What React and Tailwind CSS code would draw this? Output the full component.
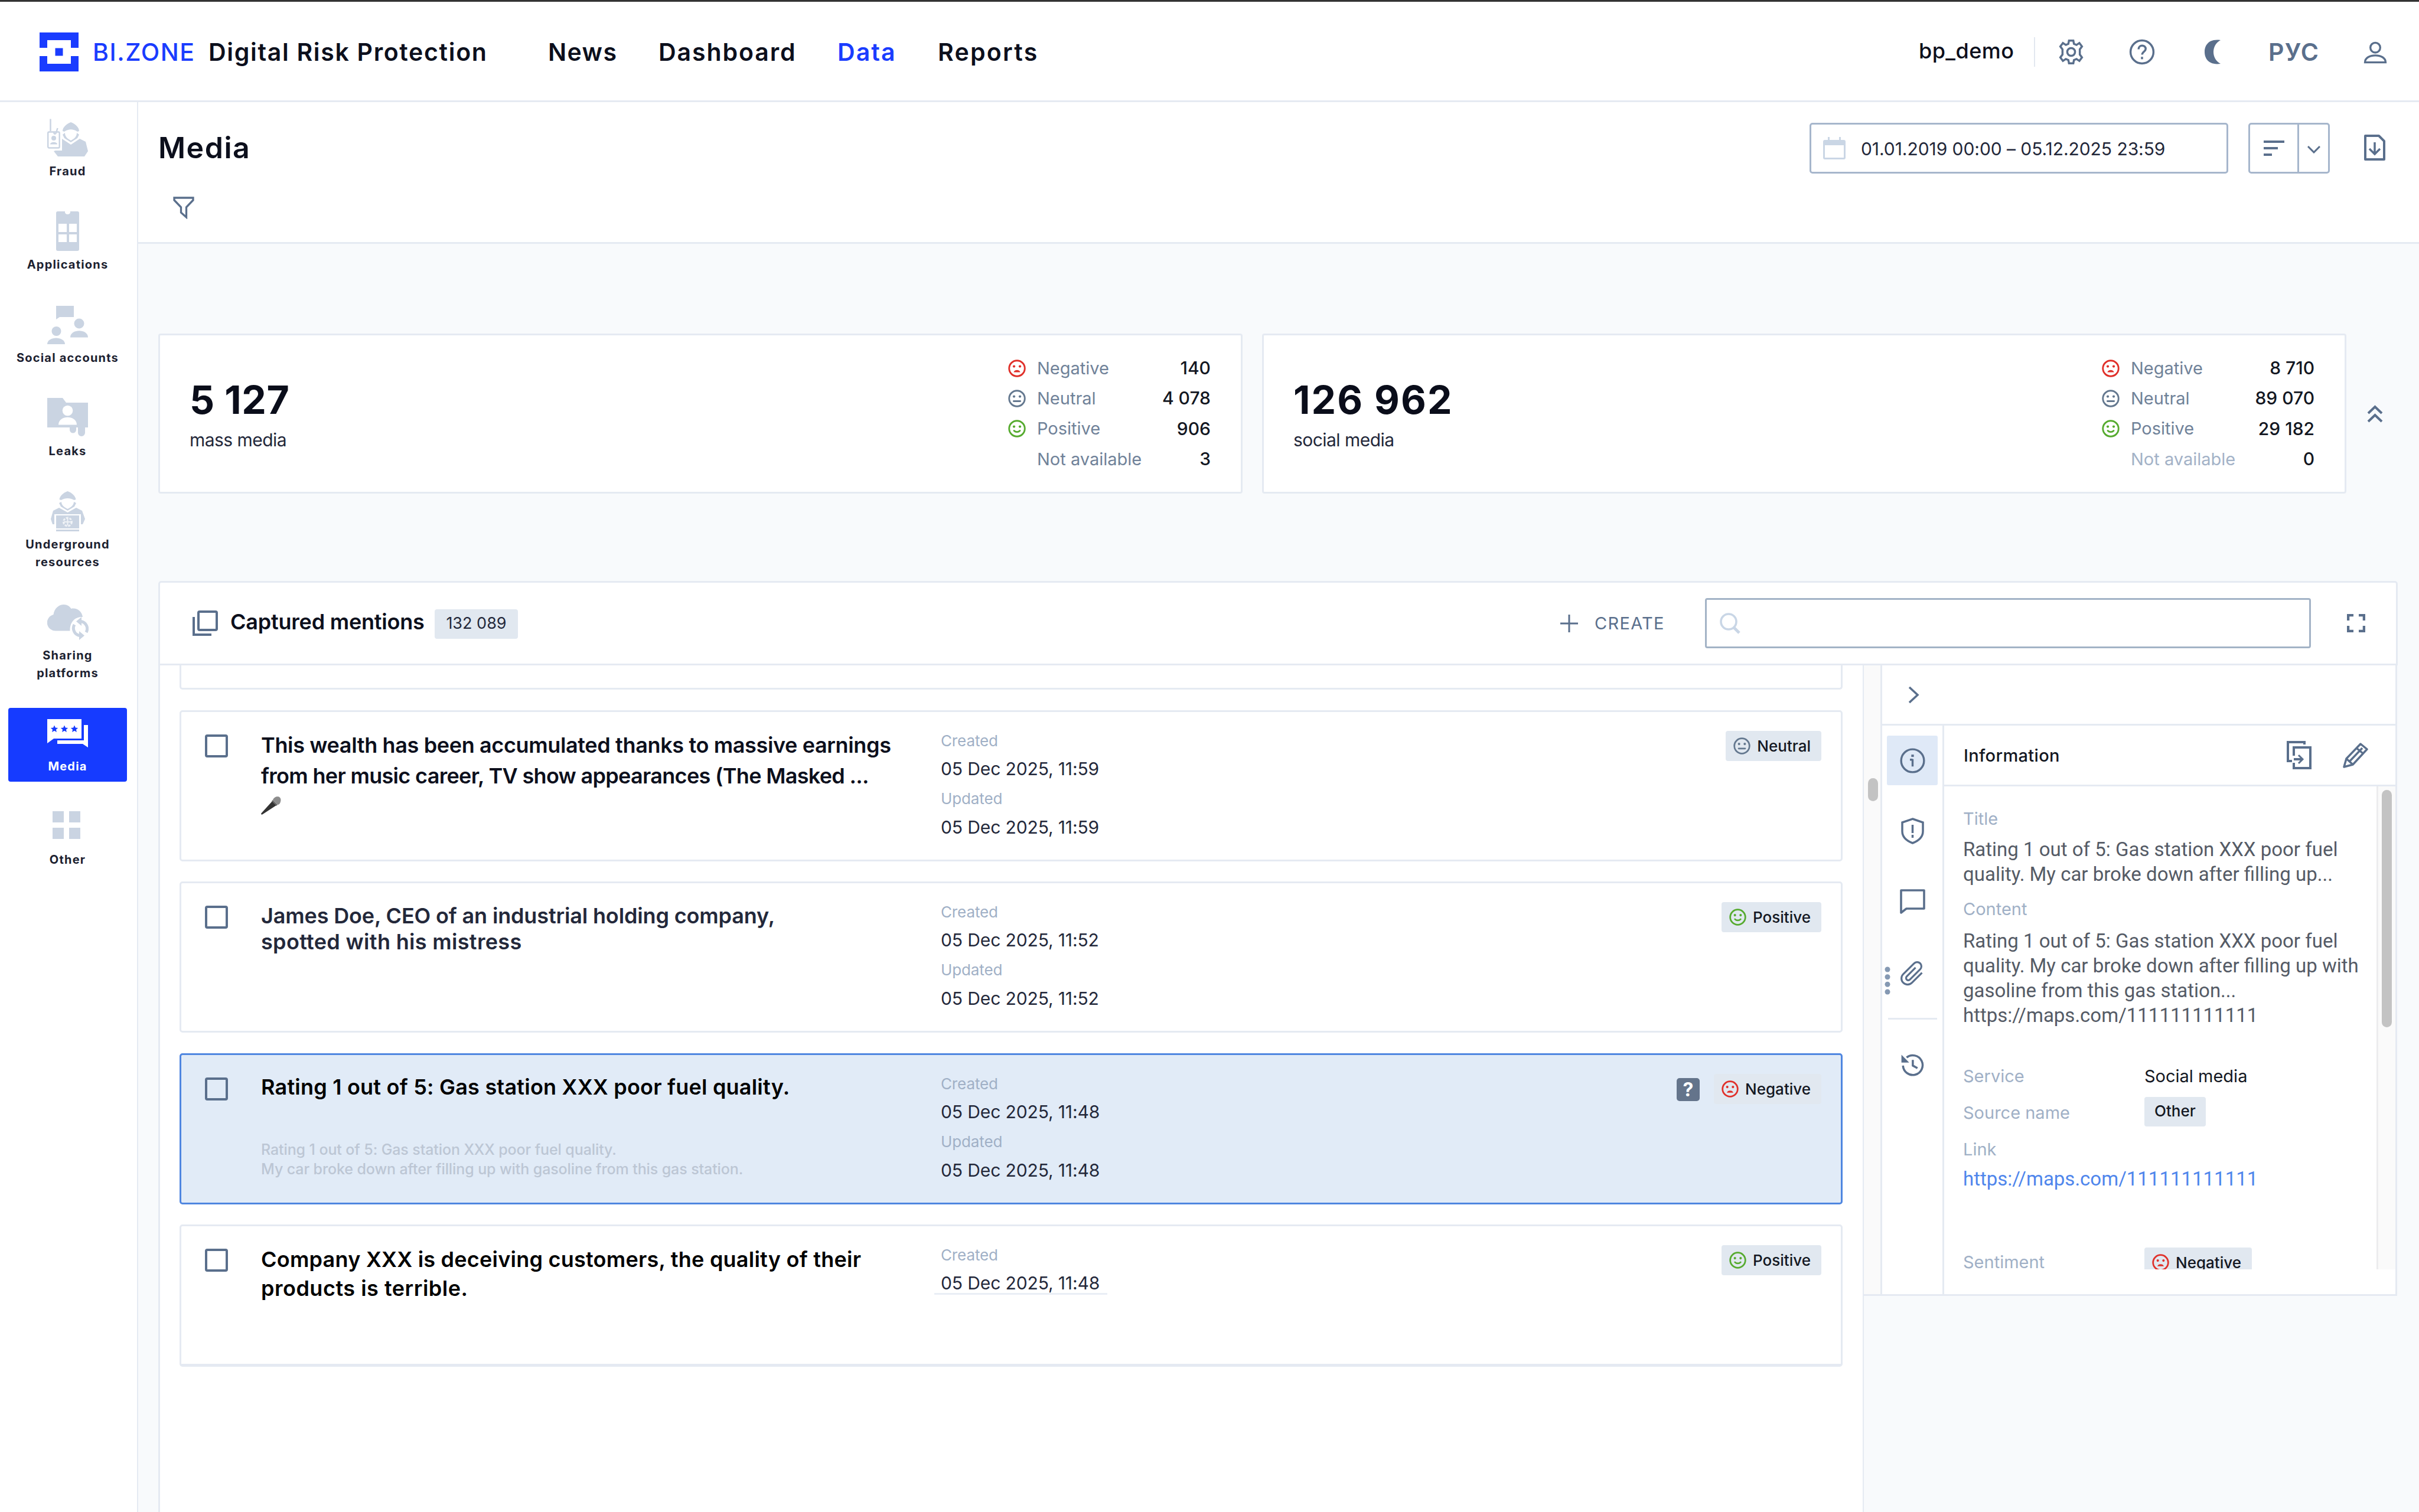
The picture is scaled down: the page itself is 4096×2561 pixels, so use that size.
import { clsx } from 'clsx';

const NAV_LINKS = [
  { label: 'News', className: 'w-[187px] tracking-[0.035em]' },
  { label: 'Dashboard', className: 'w-[303px] tracking-[0.047em]' },
  { label: 'Data', className: 'w-[170px] tracking-[0.05em] text-[#1a3cff]' },
  { label: 'Reports', className: 'tracking-[0.055em]' },
];

const SIDE_ITEMS = [
  { label: 'Fraud', icon: FraudIcon },
  { label: 'Applications', icon: AppsIcon },
  { label: 'Social accounts', icon: SocialIcon },
  { label: 'Leaks', icon: LeaksIcon },
  { label: 'Underground resources', icon: UndergroundIcon },
  { label: 'Sharing platforms', icon: SharingIcon },
  { label: 'Media', icon: MediaIcon, active: true },
  { label: 'Other', icon: OtherIcon },
];

const STATS = [
  {
    total: '5 127',
    totalClass: 'tracking-[0.01em]',
    label: 'mass media',
    width: 'w-[343px]',
    rows: [
      { mood: 'negative', label: 'Negative', value: '140' },
      { mood: 'neutral', label: 'Neutral', value: '4 078' },
      { mood: 'positive', label: 'Positive', value: '906' },
      { label: 'Not available', value: '3' },
    ],
  },
  {
    total: '126 962',
    totalClass: 'tracking-[0.032em]',
    label: 'social media',
    width: 'w-[360px]',
    rows: [
      { mood: 'negative', label: 'Negative', value: '8 710' },
      { mood: 'neutral', label: 'Neutral', value: '89 070' },
      { mood: 'positive', label: 'Positive', value: '29 182' },
      { label: 'Not available', value: '0', muted: true },
    ],
  },
];

const MENTIONS = [
  {
    lines: [
      { text: 'This wealth has been accumulated thanks to massive earnings', className: 'tracking-[-0.01em]' },
      { text: 'from her music career, TV show appearances (The Masked ...', className: 'tracking-[-0.019em]' },
    ],
    titleClass: 'pt-[30px] leading-[52px] text-[#0c0f1c]',
    mic: true,
    created: '05 Dec 2025, 11:59',
    updated: '05 Dec 2025, 11:59',
    mood: 'neutral',
    tag: 'Neutral',
  },
  {
    lines: [
      { text: 'James Doe, CEO of an industrial holding company,', className: 'tracking-[-0.004em]' },
      { text: 'spotted with his mistress', className: 'tracking-[0.009em]' },
    ],
    titleClass: 'pt-[33px] leading-[44px] text-[#23283a]',
    created: '05 Dec 2025, 11:52',
    updated: '05 Dec 2025, 11:52',
    mood: 'positive',
    tag: 'Positive',
  },
  {
    lines: [{ text: 'Rating 1 out of 5: Gas station XXX poor fuel quality.', className: 'tracking-[0.006em]' }],
    titleClass: 'pt-[30px] leading-[49px] text-black',
    note: [
      'Rating 1 out of 5: Gas station XXX poor fuel quality.',
      'My car broke down after filling up with gasoline from this gas station.',
    ],
    created: '05 Dec 2025, 11:48',
    updated: '05 Dec 2025, 11:48',
    mood: 'negative',
    tag: 'Negative',
    selected: true,
  },
  {
    lines: [
      { text: 'Company XXX is deceiving customers, the quality of their', className: 'tracking-[0.0065em]' },
      { text: 'products is terrible.', className: 'tracking-[0.014em]' },
    ],
    titleClass: 'pt-[32px] leading-[49px] text-black',
    created: '05 Dec 2025, 11:48',
    mood: 'positive',
    tag: 'Positive',
    last: true,
  },
];

const MOODS = {
  negative: { color: 'text-[#e0302a]', mouth: 'M7.5 17.2c.6-2.1 2.3-3 4.5-3s3.9.9 4.5 3z', filled: true },
  neutral: { color: 'text-[#64788f]', mouth: 'M7.5 15.6h9' },
  positive: { color: 'text-[#56ab2f]', mouth: 'M8 14.8c2.2 2.3 5.8 2.3 8 0' },
};

function Face({ mood, className }) {
  const { color, mouth, filled } = MOODS[mood];
  return (
    <svg viewBox="0 0 24 24" className={clsx('shrink-0', color, className)} fill="none" stroke="currentColor" strokeWidth="2.3">
      <circle cx="12" cy="12" r="10.6" />
      <circle cx="8" cy="9.2" r="1.7" fill="currentColor" stroke="none" />
      <circle cx="16" cy="9.2" r="1.7" fill="currentColor" stroke="none" />
      <path d={mouth} fill={filled ? 'currentColor' : 'none'} stroke={filled ? 'none' : 'currentColor'} strokeLinecap="round" />
    </svg>
  );
}

/* Sidebar icons, all on a 70px grid */

function SideSvg({ children }) {
  return (
    <svg viewBox="0 0 70 70" className="block h-[70px] w-[70px]" fill="currentColor">
      {children}
    </svg>
  );
}

function FraudIcon() {
  return (
    <SideSvg>
      <path d="M5.5 3.6V24M17.5 19l-2.5 8c-1 3-4 2-3.5-1" fill="none" stroke="currentColor" strokeWidth="2.5" />
      <rect x="1.2" y="25.5" width="19.5" height="27" rx="2" fill="none" stroke="currentColor" strokeWidth="2.4" />
      <circle cx="11" cy="36" r="4" />
      <path d="M5 46.5c0-5 12-5 12 0z" />
      <path d="M40 9c-8 3-14 9-14 15l3 1c7-5 15-5 22 0l3-1c0-6-6-12-14-15z" />
      <path d="M26 30l4-3c0 6 4 10 10 13 6-3 10-7 10-13l4 3-3 6-11 7-11-7z" />
      <path d="M25 37l15 10 15-10 10 5 4 16-6 9H18l-7-9 3-1h11z" />
    </SideSvg>
  );
}

function AppsIcon() {
  return (
    <SideSvg>
      <path
        fillRule="evenodd"
        d="M18 2h12v2q1 3 4.5 3T39 4V2h12q3 0 3 3v61q0 3-3 3H18q-3 0-3-3V5q0-3 3-3zM19 23v14h14V23zM37 23v14h13V23zM19 41v13h14V41zM37 41v13h13V41z"
      />
    </SideSvg>
  );
}

function SocialIcon() {
  return (
    <SideSvg>
      <path d="M15 4h30v19H21l-6 4z" />
      <circle cx="15.5" cy="47" r="8" />
      <path d="M0 69c0-14 30-14 30 0z" />
      <circle cx="54" cy="34" r="8.5" />
      <path d="M39 57.5c0-15 30-15 30 0z" />
    </SideSvg>
  );
}

function LeaksIcon() {
  return (
    <SideSvg>
      <path d="M0 2h26l6 8h37v42H0z" />
      <circle cx="34.5" cy="23.5" r="8.8" fill="#fff" />
      <path d="M19 47.5c0-17 31-17 31 0z" fill="#fff" />
      <path d="M38 50h11v6a5.5 5.5 0 0 1-11 0zM52 50h12v11a6 6 0 0 1-12 0z" />
    </SideSvg>
  );
}

function UndergroundIcon() {
  return (
    <SideSvg>
      <path d="M34.5 2c-8 3-13 8-14 14l3 1c7-4 15-4 22 0l3-1c-1-6-6-11-14-14z" />
      <path d="M20 22l4-2c0 5 4 9 10.5 12C41 29 45 25 45 20l4 2-3 6-11.5 7L23 28z" />
      <path d="M20 30l14.5 8L49 30l10 5 5 14-4 9h-3V41H12v17H9l-3-9 4-14z" />
      <path d="M15 43h39v22H15zM15 67h39v3H15z" />
      <circle cx="34.5" cy="54" r="7" fill="none" stroke="#fff" strokeWidth="3" strokeDasharray="4 2" opacity="0.7" />
      <path d="M28 54h13M34.5 48v12" stroke="#fff" strokeWidth="2" opacity="0.7" />
    </SideSvg>
  );
}

function SharingIcon() {
  return (
    <SideSvg>
      <path d="M15 50.5A14.5 14 0 0 1 10.5 23C12 12 20 6 28 6c6 0 10 3 12.5 7C50 11 58.5 17 60 27c-13-1-22 9-21.5 23.5z" />
      <path d="M46 40a12.500 12.500 0 0 0 9 18.500" fill="none" stroke="currentColor" strokeWidth="5" />
      <path d="M66 53a12.500 12.500 0 0 0-9-18.500" fill="none" stroke="currentColor" strokeWidth="5" />
      <path d="M49 34.500l9-7.500v15zM63 58.500L54 51v15z" />
    </SideSvg>
  );
}

function MediaIcon() {
  const star = 'l1.8 4 4.4.4-3.3 2.9 1 4.3-3.9-2.3-3.9 2.3 1-4.3-3.3-2.9 4.4-.4z';
  return (
    <SideSvg>
      <path d="M0 12h58v33H11L0 53z" />
      <path d="M62 22h7v38l-9-6H17v-6h45z" />
      <g fill="#163bff">
        <path d={`M12 22.5${star}M29 22.5${star}M46 22.5${star}`} />
      </g>
    </SideSvg>
  );
}

function OtherIcon() {
  return (
    <SideSvg>
      <path d="M9 10h19v19H9zM37 10h19v19H37zM9 38h19v19H9zM37 38h19v19H37z" />
    </SideSvg>
  );
}

function LineIcon({ className, viewBox = '0 0 24 24', width = 1.7, children }) {
  return (
    <svg viewBox={viewBox} className={clsx('block shrink-0', className)} fill="none" stroke="currentColor" strokeWidth={width}>
      {children}
    </svg>
  );
}

function Header() {
  return (
    <header className="flex h-[173px] shrink-0 border-t-[3px] border-b-[3px] border-t-[#333] border-b-[#e5eaf2] bg-white pl-[67px] text-[41px] font-semibold text-[#0c0f1c]">
      <svg viewBox="0 0 66 66" className="mt-[52px] mr-[24px] h-[66px] w-[66px] shrink-0" fill="#1a3cff">
        <path d="M0 0h66v26H53V13H13v13H0zM0 40h13v13h40V40h13v26H0z" />
        <path d="M26.5 26.5h13v13h-13z" />
      </svg>
      <div className="flex pt-[55px] leading-[60px] whitespace-nowrap">
        <span className="w-[196px] font-medium tracking-[0.038em] text-[#1a3cff]">BI.ZONE</span>
        <span className="w-[575px] tracking-[0.041em]">Digital Risk Protection</span>
        {NAV_LINKS.map(({ label, className }) => (
          <span key={label} className={className}>
            {label}
          </span>
        ))}
      </div>

      <div className="ml-auto flex text-[#5a6f8c]">
        <span className="w-[195px] pt-[53px] text-[36px] leading-[60px] font-medium tracking-[0.012em] text-[#0c0f1c]">bp_demo</span>
        <span className="mt-[60px] mr-[39px] h-[50px] w-[2px] bg-[#e2e8f0]" />
        <LineIcon className="mt-[63px] mr-[76px] h-[44px] w-[44px]" width={1.9}>
          <path d="M10 1.5h4l.6 3 2.3 1 2.7-1.8 2.4 3.2L20 9.6v4.8l2 2.7-2.4 3.2-2.7-1.8-2.3 1-.6 3h-4l-.6-3-2.3-1-2.7 1.8L2 17.1l2-2.7V9.6L2 6.9l2.4-3.2 2.7 1.8 2.3-1z" />
          <circle cx="12" cy="12" r="3.6" />
        </LineIcon>
        <LineIcon className="mt-[63px] mr-[84px] h-[44px] w-[44px]" width={1.9}>
          <circle cx="12" cy="12" r="10.6" />
          <path d="M8.8 9.5c0-4.5 6.6-4.3 6.6-.3 0 2.5-3.3 2.6-3.3 5.3" />
          <path d="M12 16.5v2.2" />
        </LineIcon>
        <svg viewBox="0 0 27 42" className="mt-[64px] mr-[81px] h-[42px] w-[27px]" fill="currentColor">
          <path d="M27 1C5-2 0 12 0 21s5 23 27 20C11 33 11 9 27 1z" />
        </svg>
        <span className="w-[161px] pt-[55px] leading-[60px] font-semibold tracking-[0.03em]">РУС</span>
        <LineIcon className="mt-[66px] mr-[54px] h-[40px] w-[40px]" width={2}>
          <circle cx="12" cy="7" r="5" />
          <path d="M1.5 22c0-9.5 21-9.5 21 0z" />
        </LineIcon>
      </div>
    </header>
  );
}

function Sidebar() {
  return (
    <aside className="flex w-[234px] shrink-0 flex-col gap-[33px] border-r-2 border-[#e5eaf2] bg-white pt-[18px] pl-[14px]">
      {SIDE_ITEMS.map(({ label, icon: Icon, active }) => (
        <div
          key={label}
          className={clsx(
            'flex w-[201px] flex-col items-center rounded-[4px] pt-[7px] pb-[11px]',
            active ? 'bg-[#163bff] text-white' : 'text-[#cad4e2]'
          )}
        >
          <Icon />
          <span
            className={clsx(
              'mt-[7px] px-[8px] text-center text-[20px] leading-[30px] font-bold tracking-[0.06em]',
              active ? 'text-white' : 'text-[#1c2130]'
            )}
          >
            {label}
          </span>
        </div>
      ))}
    </aside>
  );
}

function Toolbar() {
  return (
    <div className="h-[240px] shrink-0 border-b-[3px] border-[#e5eaf2] bg-white pl-[34px]">
      <div className="flex pt-[35px]">
        <h1 className="pt-[12px] text-[50px] leading-[60px] font-semibold tracking-[0.03em] text-[#0c0f1c]">Media</h1>
        <div className="ml-auto flex h-[86px] w-[709px] items-center rounded-[5px] border-[3px] border-[#a6b6cc] pl-[20px]">
          <svg viewBox="0 0 38 38" className="mr-[26px] h-[38px] w-[38px] text-[#cad6e5]" fill="currentColor">
            <path d="M3 5h5V0h3v5h16V0h3v5h5q3 0 3 3v27q0 3-3 3H3q-3 0-3-3V8q0-3 3-3zM3 14v21h32V14z" />
          </svg>
          <span className="pt-[2px] text-[30px] tracking-[-0.002em] text-[#23283a]">01.01.2019 00:00 – 05.12.2025 23:59</span>
        </div>
        <div className="ml-[34px] flex h-[86px] w-[138px] rounded-[5px] border-[3px] border-[#a6b6cc] text-[#5a6f8c]">
          <div className="flex w-[83px] items-center border-r-[3px] border-[#a6b6cc] pl-[23px]">
            <svg viewBox="0 0 35 26" className="h-[26px] w-[35px]" fill="currentColor">
              <path d="M0 0h35v4H0zM0 11h24v4H0zM0 22h14v4H0z" />
            </svg>
          </div>
          <LineIcon className="mt-[36px] ml-[14px] h-[13px] w-[22px]" viewBox="0 0 22 13" width={3}>
            <path d="M1 1l10 10L21 1" />
          </LineIcon>
        </div>
        <LineIcon className="mt-[20px] mr-[57px] ml-[58px] h-[44px] w-[36px] text-[#5a6f8c]" viewBox="0 0 36 44" width={4}>
          <path d="M2 2h23l9 9v31H2z" strokeLinejoin="round" />
          <path d="M18 13v20M9 24l9 9 9-9" strokeWidth="3.5" />
        </LineIcon>
      </div>
      <LineIcon className="mt-[39px] ml-[25px] h-[38px] w-[36px] text-[#5a6f8c]" viewBox="0 0 36 38" width={3.3}>
        <path d="M2 2h32v4L22.5 18v17L13.5 27v-9L2 6z" />
      </LineIcon>
    </div>
  );
}

function StatCard({ total, totalClass, label, width, rows }) {
  return (
    <div className="flex h-[271px] w-[1836px] rounded-[4px] border-[3px] border-[#e5eaf2] bg-white pr-[51px] pl-[50px]">
      <div className="flex-1 pt-[67px]">
        <div className={clsx('text-[66px] leading-[84px] font-bold text-[#0a0d1a]', totalClass)}>{total}</div>
        <div className="mt-[1px] text-[30px] leading-[50px] tracking-[-0.018em] text-[#23283a]">{label}</div>
      </div>
      <div className={clsx('pt-[30px]', width)}>
        {rows.map((row) => (
          <div key={row.label} className="flex h-[51.3px] items-center text-[29px]">
            <div className="w-[49px]">{row.mood && <Face mood={row.mood} className="h-[30px] w-[30px]" />}</div>
            <span className={row.muted ? 'text-[#a3b2c7]' : 'text-[#708299]'}>{row.label}</span>
            <span className="ml-auto text-[30px] font-medium text-[#131722]">{row.value}</span>
          </div>
        ))}
      </div>
    </div>
  );
}

function Tag({ mood, children }) {
  return (
    <div className="flex h-[51px] items-center rounded-[4px] bg-[#e1e8f0] pr-[18px] pl-[13px]">
      <Face mood={mood} className="h-[29px] w-[29px]" />
      <span className="ml-[11px] text-[26px] font-medium text-[#131722]">{children}</span>
    </div>
  );
}

function Microphone() {
  return (
    <svg viewBox="0 0 34 32" className="mt-[8px] block h-[32px] w-[34px]">
      <path d="M1 32l-1-2L19 9l7 7L3 31z" fill="#333" />
      <path d="M18 9l8 8 2-2-8-8z" fill="#666" />
      <path d="M20 7c3-8 16-8 13 3-1 4-3 5-5 5z" fill="#8c8c8c" />
    </svg>
  );
}

function Mention({ item }) {
  return (
    <div
      className={clsx(
        'flex shrink-0 rounded-[5px] border-[3px]',
        item.last ? 'h-[241px] border-b-[5px]' : 'h-[256px]',
        item.selected ? 'border-[#4f86e0] bg-[#e1ebf7]' : 'border-[#e5eaf2] bg-white'
      )}
    >
      <div className="mt-[38px] ml-[40px] h-[39px] w-[39px] shrink-0 rounded-[4px] border-[4px] border-[#5a6f8c]" />
      <div className={clsx('ml-[56px] w-[1151px] text-[36px] font-semibold whitespace-nowrap', item.titleClass)}>
        {item.lines.map(({ text, className }) => (
          <div key={text} className={className}>
            {text}
          </div>
        ))}
        {item.mic && <Microphone />}
        {item.note && (
          <div className="mt-[65px] text-[25px] leading-[33px] font-medium tracking-[-0.004em] text-[#bcc6d4]">
            {item.note.map((line) => (
              <div key={line}>{line}</div>
            ))}
          </div>
        )}
      </div>
      <div className="pt-[24px] text-[30px] leading-[49px] tracking-[-0.004em] text-[#23283a]">
        <div className="text-[26px] text-[#a0b0c6]">Created</div>
        <div className="relative -top-[1px]">
          {item.created}
          {item.last && <div className="absolute top-[41px] -left-[11px] h-[3px] w-[293px] bg-[#e9eef5]" />}
        </div>
        {item.updated && (
          <>
            <div className="text-[26px] text-[#a0b0c6]">Updated</div>
            <div>{item.updated}</div>
          </>
        )}
      </div>
      <div className="mr-[33px] ml-auto flex items-start pt-[32px]">
        {item.selected && (
          <div className="mt-[7px] mr-[24px] h-[39px] w-[39px] rounded-[5px] bg-[#64748b] text-center text-[32px] leading-[39px] font-bold text-white">
            ?
          </div>
        )}
        <Tag mood={item.mood}>{item.tag}</Tag>
      </div>
    </div>
  );
}

function MentionsHeader() {
  return (
    <div className="flex h-[143px] shrink-0 items-center rounded-t-[5px] border-[3px] border-[#e5eaf2] bg-white pl-[55px] text-[#5a6f8c]">
      <LineIcon className="h-[43px] w-[43px]" viewBox="0 0 43 43" width={4}>
        <rect x="10" y="2" width="31" height="31" rx="2" />
        <path d="M2 11v30h30" />
      </LineIcon>
      <span className="-mt-[5px] ml-[21px] w-[346px] text-[36px] font-semibold tracking-[-0.006em] whitespace-nowrap text-[#0c0f1c]">
        Captured mentions
      </span>
      <span className="mt-[2px] flex h-[50px] w-[141px] items-center justify-center rounded-[4px] bg-[#e1e8f0] text-[27px] text-[#23283a]">
        132 089
      </span>
      <LineIcon className="ml-auto h-[30px] w-[30px]" viewBox="0 0 30 30" width={3}>
        <path d="M15 0v30M0 15h30" />
      </LineIcon>
      <span className="ml-[28px] w-[187px] text-[29px] tracking-[0.045em]">CREATE</span>
      <div className="flex h-[85px] w-[1026px] items-center rounded-[4px] border-[3px] border-[#a3b3c6] pl-[21px] text-[#c9d6e6]">
        <LineIcon className="h-[36px] w-[36px]" viewBox="0 0 36 36" width={3.6}>
          <circle cx="16" cy="15" r="13" />
          <path d="M25 25l9 9" strokeWidth="5" />
        </LineIcon>
      </div>
      <LineIcon className="mr-[52px] ml-[61px] h-[31px] w-[31px]" viewBox="0 0 31 31" width={4.5}>
        <path d="M2 11V2h9M20 2h9v9M29 20v9h-9M11 29H2v-9" />
      </LineIcon>
    </div>
  );
}

function PanelTabs() {
  return (
    <div className="relative flex w-[105px] shrink-0 flex-col items-center border-r-[3px] border-[#e5eaf2] pt-[17px] text-[#5a6f8c]">
      <div className="flex h-[84px] w-[86px] items-center justify-center rounded-[3px] bg-[#dfe9f7]">
        <LineIcon className="h-[43px] w-[43px]" width={1.9}>
          <circle cx="12" cy="12" r="10.8" />
          <path d="M12 10.5v7M9.5 11h2.5" />
          <path d="M12 6.2v2.2" strokeWidth="2.4" />
        </LineIcon>
      </div>
      <LineIcon className="mt-[55px] h-[45px] w-[39px]" viewBox="0 0 39 45" width={3.5}>
        <path d="M19.5 2L37 8v15c0 9-7 16-17.5 20C9 39 2 32 2 23V8z" />
        <path d="M19.5 12v14M19.5 29v5" />
      </LineIcon>
      <LineIcon className="mt-[76px] h-[43px] w-[43px]" viewBox="0 0 43 43" width={3.6}>
        <path d="M2 2h39v31H11l-9 7z" strokeLinejoin="round" />
      </LineIcon>
      <LineIcon className="mt-[77px] h-[45px] w-[45px]" width={1.7}>
        <path d="M20.5 11.5l-9 9a5.5 5.5 0 0 1-8-7.7l9.8-9.7a3.8 3.8 0 0 1 5.6 5.3l-9.3 9.3a2 2 0 0 1-2.9-2.8l8-8" />
      </LineIcon>
      <div className="mt-[53px] h-[3px] w-[83px] bg-[#e5eaf2]" />
      <LineIcon className="mt-[56px] h-[42px] w-[42px]" width={2}>
        <path d="M3 12.5a9.5 9.5 0 1 0 3.5-7.8" />
        <path d="M1.5 2v7.5H9z" fill="currentColor" stroke="none" />
        <path d="M12.5 7v5.5l4.5 2.5" />
      </LineIcon>
      {/* resize handle */}
      <svg viewBox="0 0 10 48" className="absolute top-[408px] left-[4px] h-[48px] w-[10px]" fill="#8599b3">
        <circle cx="5" cy="5" r="4.5" />
        <circle cx="5" cy="17.7" r="4.5" />
        <circle cx="5" cy="30.3" r="4.5" />
        <circle cx="5" cy="43" r="4.5" />
      </svg>
    </div>
  );
}

function Details() {
  return (
    <div className="flex h-[818px] overflow-hidden">
      <div className="w-[732px] overflow-hidden pt-[31px] pl-[32px] text-[29px] leading-[48px] whitespace-nowrap text-[#a0b0c6]">
        <div>Title</div>
        <div className="mt-[7px] font-['Roboto'] text-[33px] leading-[42px] text-[#555b66]">
          <div>Rating 1 out of 5: Gas station XXX poor fuel</div>
          <div>quality. My car broke down after filling up...</div>
        </div>
        <div className="mt-[14px]">Content</div>
        <div className="mt-[9px] font-['Roboto'] text-[33px] leading-[42px] text-[#555b66]">
          <div>Rating 1 out of 5: Gas station XXX poor fuel</div>
          <div>quality. My car broke down after filling up with</div>
          <div>gasoline from this gas station...</div>
          <div>https://maps.com/111111111111</div>
        </div>
        <div className="mt-[51px] grid grid-cols-[307px_1fr] leading-[62px]">
          <div>Service</div>
          <div className="text-[#131722]">Social media</div>
          <div>Source name</div>
          <div className="flex items-start">
            <span className="mt-[4px] h-[50px] rounded-[4px] bg-[#e1e8f0] px-[17px] text-[26px] leading-[48px] font-medium text-[#131722]">Other</span>
          </div>
          <div>Link</div>
        </div>
        <div className="-mt-[2px] font-['Roboto'] text-[33px] leading-[42px] text-[#4f86ec]">https://maps.com/111111111111</div>
        <div className="mt-[95px] grid grid-cols-[307px_1fr]">
          <div className="pt-[1px]">Sentiment</div>
          <div className="flex">
            <Tag mood="negative">Negative</Tag>
          </div>
        </div>
      </div>
      <div className="flex-1 border-l-[3px] border-[#ececee] bg-[#fafafa] pt-[6px] pl-[6px]">
        <div className="h-[402px] w-[17px] rounded-full bg-[#c3c3c3]" />
      </div>
    </div>
  );
}

function InfoPanel() {
  return (
    <div className="flex h-[1068px] w-[872px] flex-col border-r-[3px] border-b-[3px] border-[#e5eaf2] bg-white text-[#5a6f8c]">
      <div className="flex h-[102px] shrink-0 border-b-[3px] border-[#e5eaf2]">
        <LineIcon className="mt-[35px] ml-[44px] h-[30px] w-[20px]" viewBox="0 0 20 30" width={3.6}>
          <path d="M2 2l14 13L2 28" />
        </LineIcon>
      </div>
      <div className="flex flex-1">
        <PanelTabs />
        <div className="flex-1">
          <div className="flex h-[103px] items-center border-b-[3px] border-[#e5eaf2] pl-[33px]">
            <span className="pt-[1px] text-[29px] font-medium tracking-[0.012em] text-[#131722]">Information</span>
            <LineIcon className="ml-auto h-[48px] w-[42px]" viewBox="0 0 42 48" width={4}>
              <path d="M9 34H2V2h28v4M12 25V11h28v35H12v-9M12 31h13" />
              <path d="M20 24l7 7-7 7" strokeWidth="3" />
            </LineIcon>
            <LineIcon className="mr-[45px] ml-[53px] h-[44px] w-[44px]" viewBox="0 0 44 44" width={3.5}>
              <path d="M2 42l4-14L30 3l11 9-24 26zM23 10l11 9M6 28l11 10M12 32L33 10" strokeLinejoin="round" />
            </LineIcon>
          </div>
          <Details />
        </div>
      </div>
    </div>
  );
}

export default function App() {
  return (
    <div className="flex h-[2561px] w-[4096px] flex-col overflow-hidden bg-white font-['Inter',sans-serif]">
      <Header />
      <div className="flex min-h-0 flex-1">
        <Sidebar />
        <main className="flex min-w-0 flex-1 flex-col bg-[#f8fafc]">
          <Toolbar />

          <div className="mt-[152px] flex shrink-0 items-center gap-[33px] pl-[34px]">
            {STATS.map((stat) => (
              <StatCard key={stat.label} {...stat} />
            ))}
            <LineIcon className="ml-[2px] h-[30px] w-[27px] text-[#5a6f8c]" viewBox="0 0 27 30" width={4}>
              <path d="M2 14L13.5 3 25 14M2 28l11.5-11L25 28" />
            </LineIcon>
          </div>

          <section className="mt-[148px] mr-[36px] ml-[34px] flex min-h-0 flex-1 flex-col">
            <MentionsHeader />
            <div className="flex min-h-0 flex-1">
              <div className="flex w-[2888px] shrink-0 flex-col gap-[34.5px] overflow-hidden border-r-2 border-l-[3px] border-[#e5eaf2] bg-white pr-[34px] pl-[33px]">
                <div className="h-[41px] shrink-0 rounded-b-[5px] border-[3px] border-t-0 border-[#e5eaf2]" />
                {MENTIONS.map((item) => (
                  <Mention key={item.lines[0].text} item={item} />
                ))}
              </div>
              <div className="h-[1068px] w-[31px] shrink-0 border-r-[3px] border-b-[3px] border-[#e5eaf2] bg-[#fafafa] pt-[191px] pl-[7px]">
                <div className="h-[39px] w-[17px] rounded-full bg-[#c3c3c3]" />
              </div>
              <InfoPanel />
            </div>
          </section>
        </main>
      </div>
    </div>
  );
}
